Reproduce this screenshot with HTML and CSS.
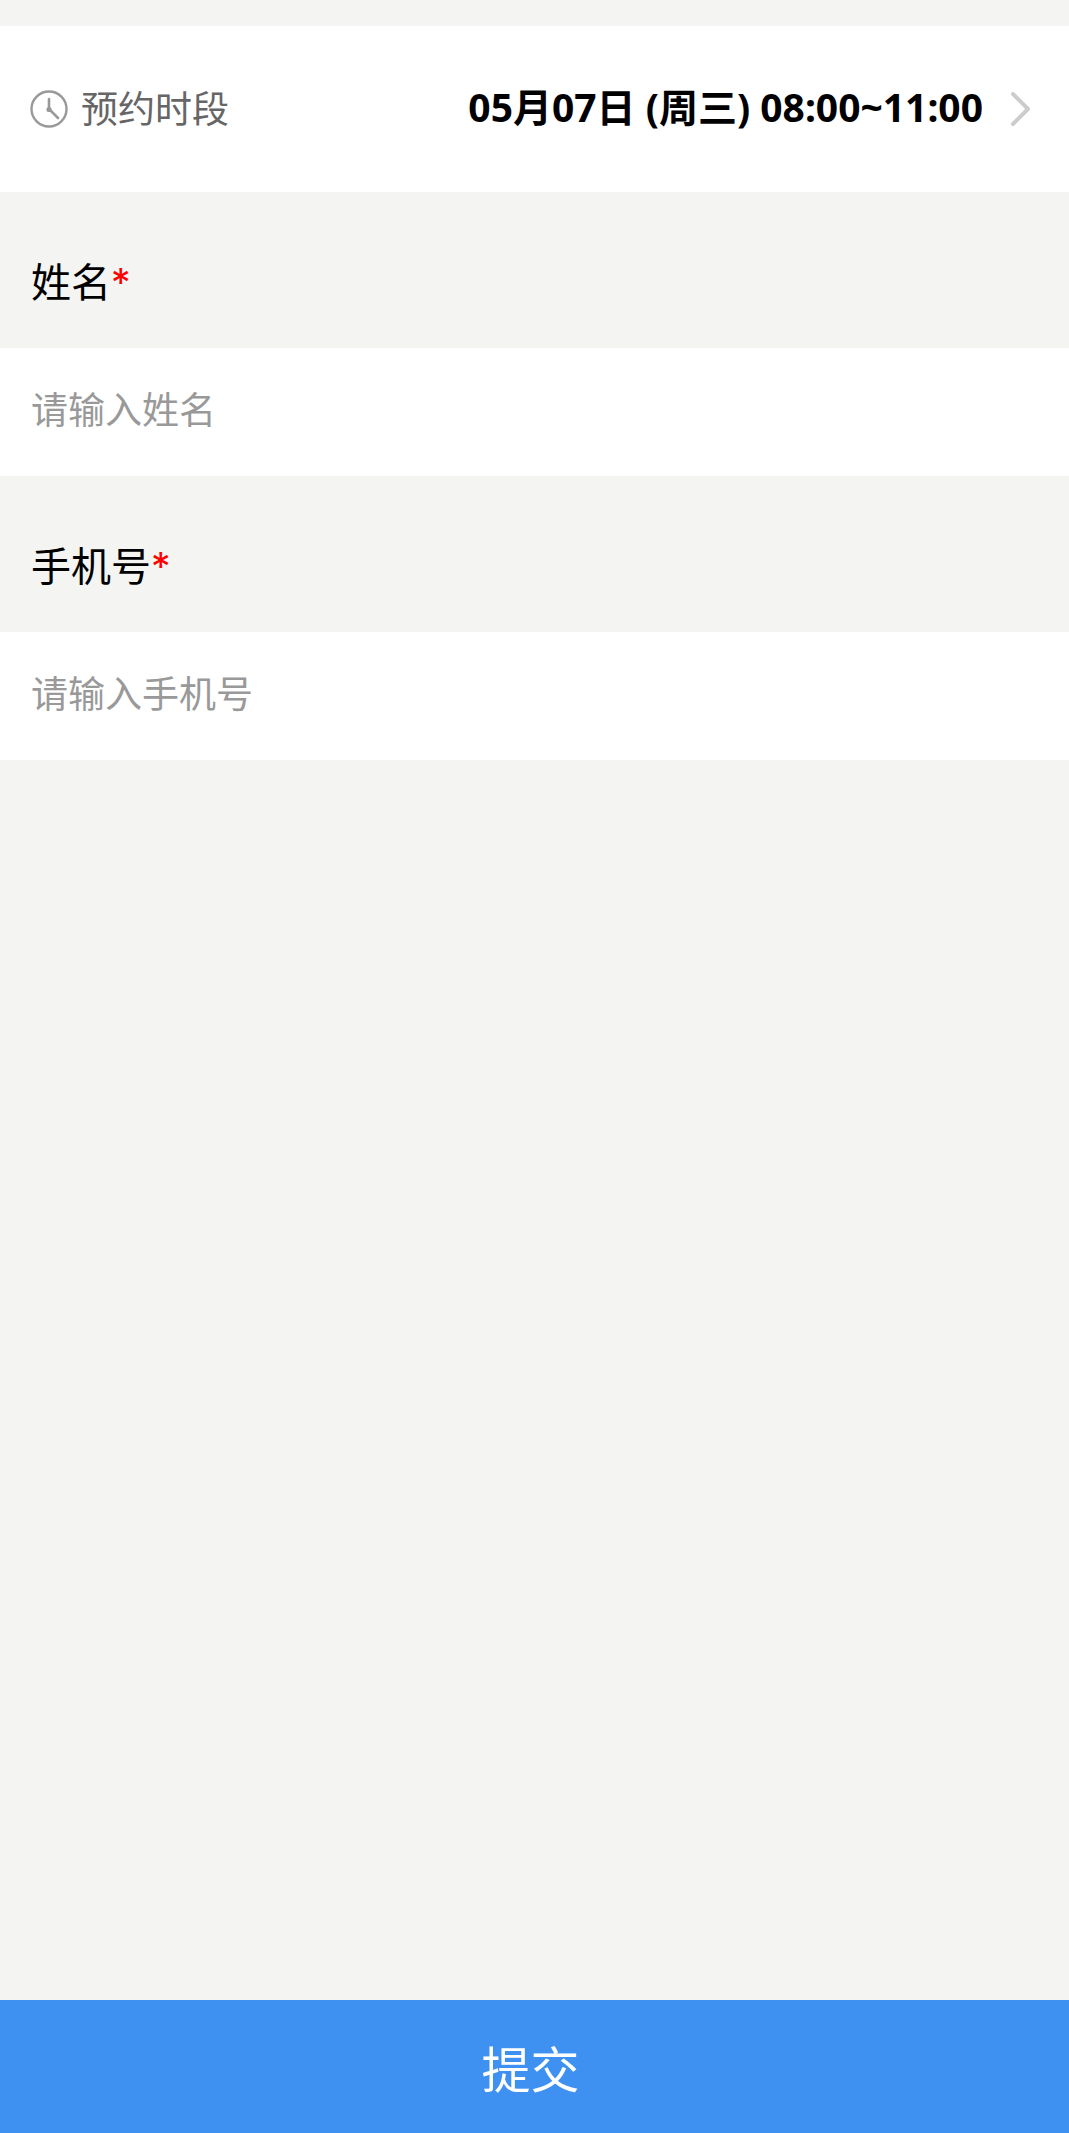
FILE: index.html
```html
<!DOCTYPE html>
<html lang="zh-CN">
<head>
<meta charset="utf-8">
<meta name="viewport" content="width=device-width, initial-scale=1">
<title>预约</title>
<link rel="stylesheet" href="styles.css">
</head>
<body>
<form class="page">
  <button type="button" class="slot">
    <svg class="clock" viewBox="0 0 38 38" aria-hidden="true">
      <circle cx="19" cy="19" r="17.5" fill="none" stroke="#999" stroke-width="2.4"/>
      <path d="M19 9V19L28 28" fill="none" stroke="#999" stroke-width="2.6" stroke-linecap="round"/>
      <circle cx="19" cy="19.5" r="2.6" fill="#999"/>
    </svg>
    <span class="slot-label">预约时段</span>
    <span class="slot-value">05月07日 (周三) 08:00~11:00</span>
    <svg class="arrow" viewBox="0 0 20 36" aria-hidden="true">
      <path d="M3 3L18 18L3 33" fill="none" stroke="#ccc" stroke-width="4" stroke-linecap="round" stroke-linejoin="round"/>
    </svg>
  </button>
  <label class="field-label" for="name">姓名<span class="required">*</span></label>
  <input class="field-input" id="name" type="text" placeholder="请输入姓名">
  <label class="field-label" for="phone">手机号<span class="required">*</span></label>
  <input class="field-input" id="phone" type="tel" placeholder="请输入手机号">
  <button type="submit" class="submit">提交</button>
</form>
</body>
</html>
```
FILE: styles.css
```css
* {
  box-sizing: border-box;
}

body {
  margin: 0;
  background: #f4f4f2;
  color: #000;
  font-family: "Noto Sans CJK SC", sans-serif;
}

button,
input {
  border: 0;
  border-radius: 0;
  margin: 0;
  font-family: inherit;
}

.page {
  display: flex;
  flex-direction: column;
  min-height: 100vh;
  padding-top: 26px;
}

.slot {
  display: flex;
  align-items: center;
  padding: 54px 39px 54px 30px;
  background: #fff;
  color: #000;
  font-size: 37px;
  line-height: 54px;
}

.clock {
  width: 38px;
  height: 38px;
  margin-right: 13px;
}

.slot-label {
  padding-bottom: 4px;
  color: #666;
}

.slot-value {
  margin-left: auto;
  padding-bottom: 4px;
  font-family: "Noto Sans", "Noto Sans CJK SC", sans-serif;
  font-size: 39px;
  font-weight: 700;
}

.arrow {
  width: 20px;
  height: 36px;
  margin-left: 27px;
}

.field-label {
  padding: 58px 30px 38px 31px;
  font-size: 40px;
  line-height: 60px;
}

.required {
  color: #f00;
  font-family: Inter, sans-serif;
  font-size: 39px;
  line-height: 1;
}

.field-input {
  width: 100%;
  height: 128px;
  padding: 0 31px 8px;
  background: #fff;
  font-size: 37px;
}

.field-input::placeholder {
  color: #999;
  opacity: 1;
}

.submit {
  margin-top: auto;
  padding: 30px 38px 30px 30px;
  background: #3e91f1;
  color: #fff;
  font-size: 49px;
  line-height: 73px;
}
```
